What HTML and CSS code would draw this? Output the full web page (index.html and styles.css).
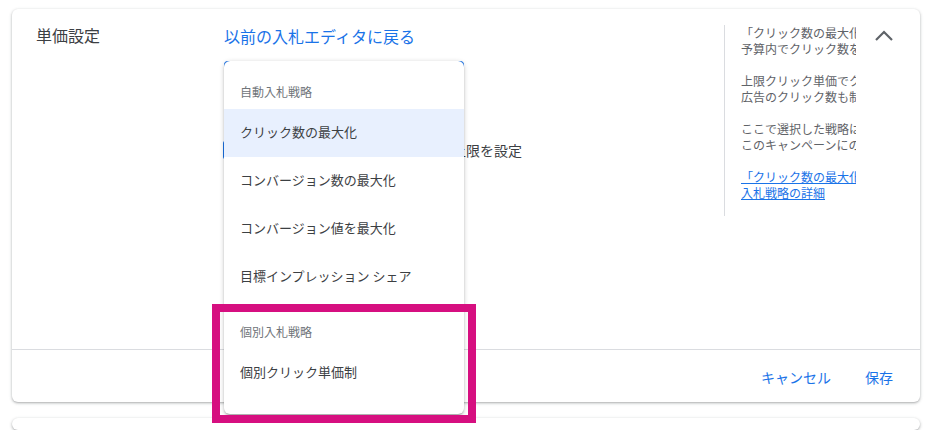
FILE: index.html
```html
<!DOCTYPE html>
<html lang="ja">
<head>
<meta charset="utf-8">
<title>単価設定</title>
<link rel="stylesheet" href="styles.css">
</head>
<body>
<div class="page">
  <section class="card">
    <div class="card-body">
      <div class="label-col">単価設定</div>
      <div class="main-col">
        <a class="back-link" href="#">以前の入札エディタに戻る</a>
        <div class="select-wrap">
          <div class="select-box"></div>
          <div class="menu">
            <div class="menu-header">自動入札戦略</div>
            <div class="menu-item selected">クリック数の最大化</div>
            <div class="menu-item">コンバージョン数の最大化</div>
            <div class="menu-item">コンバージョン値を最大化</div>
            <div class="menu-item">目標インプレッション シェア</div>
            <div class="menu-header">個別入札戦略</div>
            <div class="menu-item">個別クリック単価制</div>
          </div>
        </div>
        <div class="check-row">
          <span class="checkbox"></span>
          <span class="check-label">上限クリック単価の上限を設定</span>
        </div>
      </div>
      <div class="help-col">
        <p>「クリック数の最大化」では、<br>予算内でクリック数を最大化します。</p>
        <p>上限クリック単価でクリック単価を<br>広告のクリック数も制限されます。</p>
        <p>ここで選択した戦略は<br>このキャンペーンにのみ適用されます。</p>
        <p><a href="#">「クリック数の最大化」<br>入札戦略の詳細</a></p>
      </div>
      <div class="toggle-col">
        <svg class="chevron" width="24" height="24" viewBox="0 0 24 24"><polyline points="4,16 12,8 20,16" fill="none" stroke="#5f6368" stroke-width="2.2"/></svg>
      </div>
    </div>
    <div class="card-footer">
      <button class="text-btn">キャンセル</button>
      <button class="text-btn">保存</button>
    </div>
  </section>
  <section class="card next-card"></section>
  <div class="highlight"></div>
</div>
</body>
</html>
```

FILE: styles.css
```css
* { box-sizing: border-box; }
html, body { margin: 0; background: #fff; }
body {
  font-family: "Noto Sans CJK JP", "Noto Sans", Roboto, sans-serif;
  color: #3c4043;
  overflow: hidden;
}
.page {
  position: relative;
  padding: 9px 27px 0 12px;
  height: 430px;
  overflow: hidden;
}
.card {
  background: #fff;
  border-radius: 6px;
  box-shadow: 0 1px 2px rgba(60,64,67,0.3), 0 1px 3px 1px rgba(60,64,67,0.12);
}
.card-body {
  display: grid;
  grid-template-columns: 212px 500px 132px 64px;
  height: 340px;
}
.label-col {
  padding: 14px 0 0 24px;
  font-size: 16px;
  line-height: 24px;
  color: #3c4043;
}
.main-col {
  padding-top: 15px;
}
.back-link {
  display: block;
  font-size: 16px;
  line-height: 24px;
  color: #1a73e8;
  text-decoration: none;
}
.select-wrap {
  position: relative;
  margin-top: 13px;
  width: 240px;
  height: 56px;
}
.select-box {
  height: 56px;
  border: 2px solid #1a73e8;
  border-radius: 4px;
}
.menu {
  position: absolute;
  top: 0;
  left: 0;
  width: 240px;
  padding-bottom: 17px;
  background: #fff;
  border-radius: 6px;
  box-shadow: 0 2px 2px rgba(0,0,0,0.14), 0 3px 1px -2px rgba(0,0,0,0.12), 0 1px 5px rgba(0,0,0,0.2);
  z-index: 2;
}
.menu-header {
  height: 48px;
  padding: 22px 16px 0;
  font-size: 12px;
  line-height: 18px;
  color: #70757a;
}
.menu-item {
  height: 48px;
  display: flex;
  align-items: center;
  padding: 0 16px 3px;
  font-size: 13px;
  color: #3c4043;
}
.menu-item.selected { background: #e8f0fe; }
.check-row {
  display: flex;
  align-items: center;
  margin-top: 23px;
  margin-left: -1px;
  height: 20px;
}
.checkbox {
  width: 18px;
  height: 18px;
  border: 2px solid #1a73e8;
  border-radius: 2px;
}
.check-label {
  margin-left: 85px;
  font-size: 14px;
  line-height: 20px;
  color: #3c4043;
  white-space: nowrap;
}
.help-col {
  align-self: start;
  margin-top: 16px;
  border-left: 1px solid #dadce0;
  padding: 0 0 15px 16px;
  overflow: hidden;
}
.help-col p {
  margin: 0 0 16px;
  width: 115px;
  overflow: hidden;
  white-space: nowrap;
  font-size: 12px;
  line-height: 16px;
  color: #5f6368;
}
.help-col p:last-child { margin-bottom: 0; }
.help-col a { color: #1a73e8; text-decoration: underline; }
.toggle-col {
  padding: 15px 0 0 16px;
}
.chevron { display: block; }
.card-footer {
  height: 53px;
  border-top: 1px solid #dadce0;
  display: flex;
  justify-content: flex-end;
  align-items: center;
  gap: 18px;
  padding: 1px 19px 0 0;
}
.text-btn {
  border: 0;
  background: none;
  padding: 0 8px;
  font-family: inherit;
  font-size: 14px;
  line-height: 20px;
  color: #1a73e8;
}
.next-card {
  margin-top: 16px;
  height: 12px;
}
.highlight {
  position: absolute;
  left: 212px;
  top: 304px;
  width: 264px;
  height: 119px;
  border: 8px solid #d60f80;
  z-index: 3;
}
```
